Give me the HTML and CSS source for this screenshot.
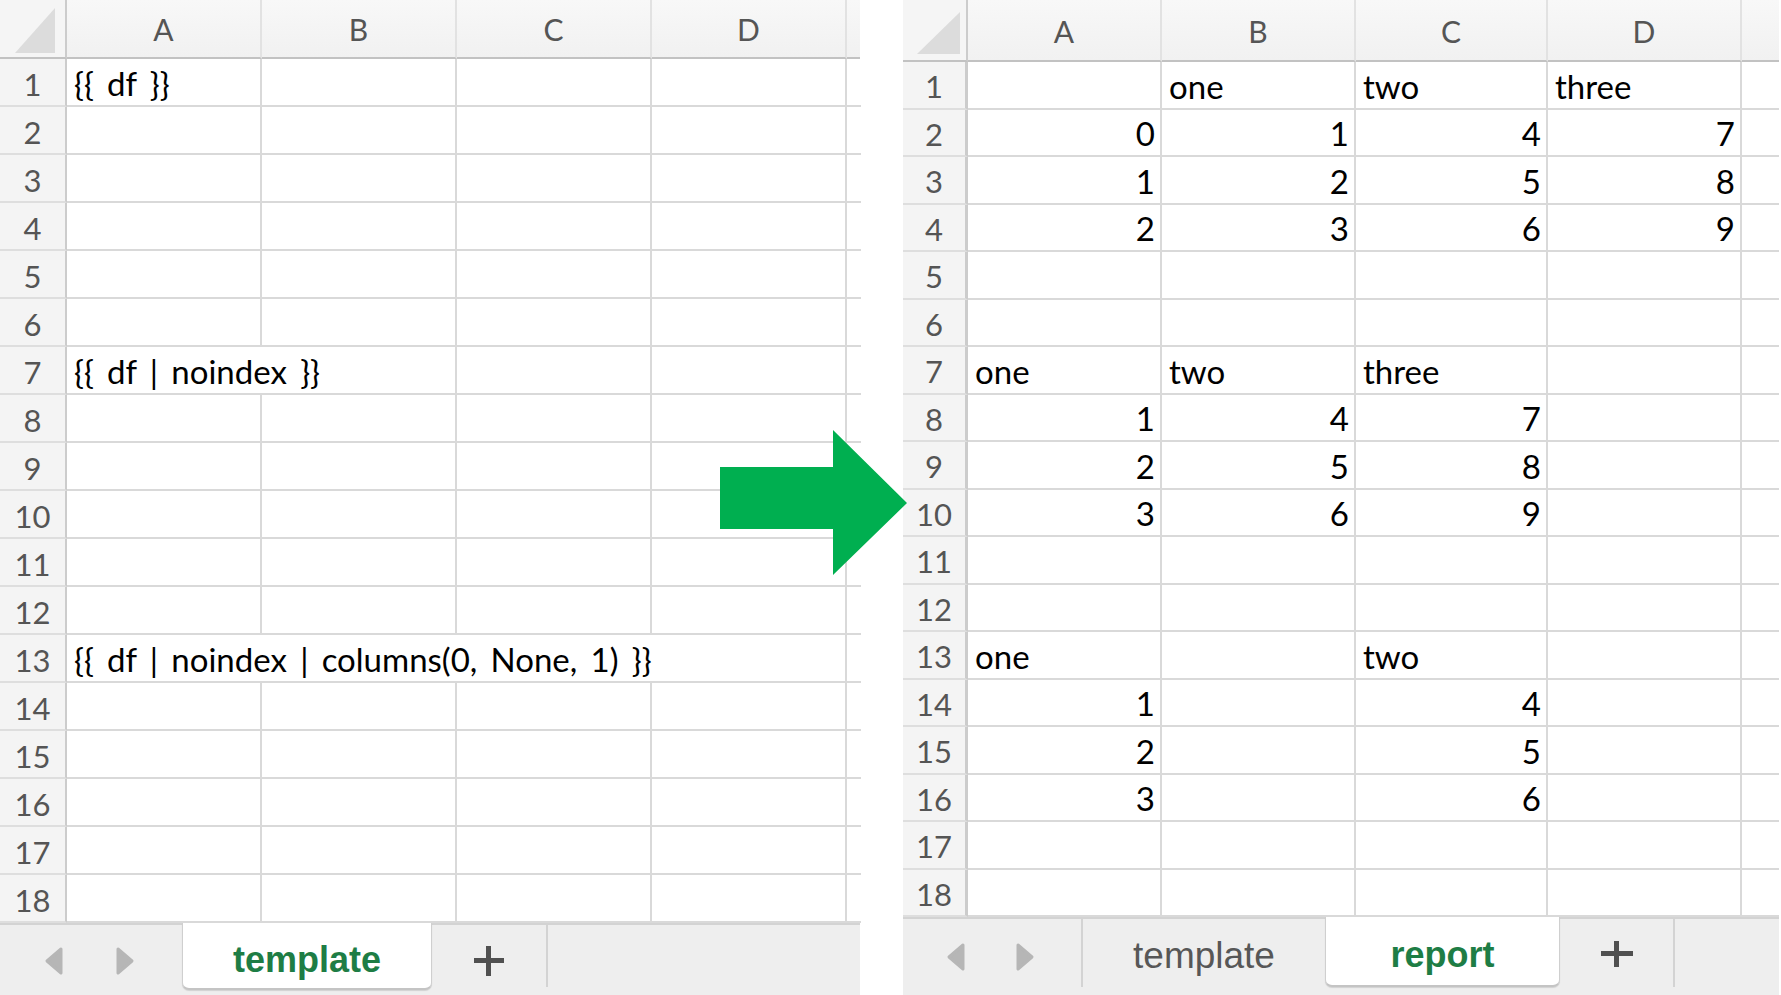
FILE: index.html
```html
<!DOCTYPE html>
<html>
<head>
<meta charset="utf-8">
<link rel="stylesheet" href="styles.css">
</head>
<body>
<div class="stage">
  <section class="sheet sheet-left">
    <div class="grid grid-left">
      <div class="corner"><span class="tri"></span></div><div class="ch">A</div><div class="ch">B</div><div class="ch">C</div><div class="ch">D</div><div class="ch e"></div>
      <div class="rh">1</div><div class="c">{{ df }}</div><div class="c"></div><div class="c"></div><div class="c"></div><div class="c e"></div>
      <div class="rh">2</div><div class="c"></div><div class="c"></div><div class="c"></div><div class="c"></div><div class="c e"></div>
      <div class="rh">3</div><div class="c"></div><div class="c"></div><div class="c"></div><div class="c"></div><div class="c e"></div>
      <div class="rh">4</div><div class="c"></div><div class="c"></div><div class="c"></div><div class="c"></div><div class="c e"></div>
      <div class="rh">5</div><div class="c"></div><div class="c"></div><div class="c"></div><div class="c"></div><div class="c e"></div>
      <div class="rh">6</div><div class="c"></div><div class="c"></div><div class="c"></div><div class="c"></div><div class="c e"></div>
      <div class="rh">7</div><div class="c span2">{{ df | noindex }}</div><div class="c"></div><div class="c"></div><div class="c e"></div>
      <div class="rh">8</div><div class="c"></div><div class="c"></div><div class="c"></div><div class="c"></div><div class="c e"></div>
      <div class="rh">9</div><div class="c"></div><div class="c"></div><div class="c"></div><div class="c"></div><div class="c e"></div>
      <div class="rh">10</div><div class="c"></div><div class="c"></div><div class="c"></div><div class="c"></div><div class="c e"></div>
      <div class="rh">11</div><div class="c"></div><div class="c"></div><div class="c"></div><div class="c"></div><div class="c e"></div>
      <div class="rh">12</div><div class="c"></div><div class="c"></div><div class="c"></div><div class="c"></div><div class="c e"></div>
      <div class="rh">13</div><div class="c span4">{{ df | noindex | columns(0, None, 1) }}</div><div class="c e"></div>
      <div class="rh">14</div><div class="c"></div><div class="c"></div><div class="c"></div><div class="c"></div><div class="c e"></div>
      <div class="rh">15</div><div class="c"></div><div class="c"></div><div class="c"></div><div class="c"></div><div class="c e"></div>
      <div class="rh">16</div><div class="c"></div><div class="c"></div><div class="c"></div><div class="c"></div><div class="c e"></div>
      <div class="rh">17</div><div class="c"></div><div class="c"></div><div class="c"></div><div class="c"></div><div class="c e"></div>
      <div class="rh">18</div><div class="c"></div><div class="c"></div><div class="c"></div><div class="c"></div><div class="c e"></div>
    </div>
    <div class="tabbar tabbar-left">
      <div class="nav nav-left">
        <svg class="navarrow" viewBox="0 0 20 30"><path d="M17 3 L3 15 L17 27 Z"/></svg>
        <svg class="navarrow" viewBox="0 0 20 30"><path d="M3 3 L17 15 L3 27 Z"/></svg>
      </div>
      <div class="tab tab-active tab-template-active">template</div>
      <div class="add add-left"><span class="plus"></span></div>
      <div class="sep"></div>
    </div>
  </section>

  <div class="gap"></div>

  <section class="sheet sheet-right">
    <div class="grid grid-right">
      <div class="corner"><span class="tri"></span></div><div class="ch">A</div><div class="ch">B</div><div class="ch">C</div><div class="ch">D</div><div class="ch e"></div>
      <div class="rh">1</div><div class="c"></div><div class="c">one</div><div class="c">two</div><div class="c">three</div><div class="c e"></div>
      <div class="rh">2</div><div class="c n">0</div><div class="c n">1</div><div class="c n">4</div><div class="c n">7</div><div class="c e"></div>
      <div class="rh">3</div><div class="c n">1</div><div class="c n">2</div><div class="c n">5</div><div class="c n">8</div><div class="c e"></div>
      <div class="rh">4</div><div class="c n">2</div><div class="c n">3</div><div class="c n">6</div><div class="c n">9</div><div class="c e"></div>
      <div class="rh">5</div><div class="c"></div><div class="c"></div><div class="c"></div><div class="c"></div><div class="c e"></div>
      <div class="rh">6</div><div class="c"></div><div class="c"></div><div class="c"></div><div class="c"></div><div class="c e"></div>
      <div class="rh">7</div><div class="c">one</div><div class="c">two</div><div class="c">three</div><div class="c"></div><div class="c e"></div>
      <div class="rh">8</div><div class="c n">1</div><div class="c n">4</div><div class="c n">7</div><div class="c"></div><div class="c e"></div>
      <div class="rh">9</div><div class="c n">2</div><div class="c n">5</div><div class="c n">8</div><div class="c"></div><div class="c e"></div>
      <div class="rh">10</div><div class="c n">3</div><div class="c n">6</div><div class="c n">9</div><div class="c"></div><div class="c e"></div>
      <div class="rh">11</div><div class="c"></div><div class="c"></div><div class="c"></div><div class="c"></div><div class="c e"></div>
      <div class="rh">12</div><div class="c"></div><div class="c"></div><div class="c"></div><div class="c"></div><div class="c e"></div>
      <div class="rh">13</div><div class="c">one</div><div class="c"></div><div class="c">two</div><div class="c"></div><div class="c e"></div>
      <div class="rh">14</div><div class="c n">1</div><div class="c"></div><div class="c n">4</div><div class="c"></div><div class="c e"></div>
      <div class="rh">15</div><div class="c n">2</div><div class="c"></div><div class="c n">5</div><div class="c"></div><div class="c e"></div>
      <div class="rh">16</div><div class="c n">3</div><div class="c"></div><div class="c n">6</div><div class="c"></div><div class="c e"></div>
      <div class="rh">17</div><div class="c"></div><div class="c"></div><div class="c"></div><div class="c"></div><div class="c e"></div>
      <div class="rh">18</div><div class="c"></div><div class="c"></div><div class="c"></div><div class="c"></div><div class="c e"></div>
    </div>
    <div class="tabbar tabbar-right">
      <div class="nav nav-right">
        <svg class="navarrow" viewBox="0 0 20 30"><path d="M17 3 L3 15 L17 27 Z"/></svg>
        <svg class="navarrow" viewBox="0 0 20 30"><path d="M3 3 L17 15 L3 27 Z"/></svg>
      </div>
      <div class="sep"></div>
      <div class="tab tab-inactive">template</div>
      <div class="tab tab-active tab-report">report</div>
      <div class="add add-right"><span class="plus"></span></div>
      <div class="sep"></div>
    </div>
  </section>
</div>

<svg class="big-arrow" viewBox="0 0 187 145"><polygon points="0,37 113,37 113,0 187,73 113,145 113,99 0,99"/></svg>
</body>
</html>
```

FILE: styles.css
```css
* { box-sizing: border-box; }

html, body {
  margin: 0;
  padding: 0;
  background: #ffffff;
}

body {
  width: 1781px;
  height: 995px;
  overflow: hidden;
  position: relative;
  font-family: Lato, "Liberation Sans", sans-serif;
}

.stage {
  display: flex;
  height: 995px;
}

.sheet {
  display: flex;
  flex-direction: column;
  height: 995px;
}

.sheet-left { width: 860px; }
.gap { width: 43px; flex: none; }
.sheet-right { width: 876px; }

.grid { display: grid; }

.grid-left {
  grid-template-columns: 67px 195px 195px 195px 195px 13px;
  grid-template-rows: 59px repeat(18, 48px);
}

.grid-right {
  grid-template-columns: 65px 194px 194px 192px 194px 37px;
  grid-template-rows: 62px repeat(18, 47.5px);
}

.c {
  border-right: 2px solid #d9d9d9;
  border-bottom: 2px solid #d9d9d9;
  display: flex;
  align-items: flex-end;
  padding: 0 7px 1px 7px;
  font-size: 33px;
  line-height: 1.2;
  word-spacing: 4.8px;
  color: #000;
  white-space: nowrap;
  overflow: visible;
}

.c.n { justify-content: flex-end; padding-right: 5px; }
.c.e, .ch.e { border-right: none; }
.span2 { grid-column: span 2; }
.span4 { grid-column: span 4; }

.corner {
  position: relative;
  background: #f5f5f5;
  border-right: 2px solid #cccccc;
  border-bottom: 2px solid #c2c2c2;
}

.tri {
  position: absolute;
  left: 15px;
  top: 8px;
  width: 40px;
  height: 45px;
  background: #dcdcdc;
  clip-path: polygon(100% 0, 100% 100%, 0 100%);
}

.grid-right .tri {
  left: 14px;
  top: 12px;
  width: 43px;
  height: 42px;
}

.ch {
  background: linear-gradient(#f8f8f8, #f1f1f1);
  border-right: 2px solid #e2e2e2;
  border-bottom: 2px solid #c2c2c2;
  display: flex;
  align-items: center;
  justify-content: center;
  color: #555555;
  font-size: 30px;
  padding-top: 1px;
}

.rh {
  background: #f4f4f4;
  border-right: 2px solid #cccccc;
  border-bottom: 2px solid #dedede;
  display: flex;
  align-items: flex-end;
  justify-content: center;
  color: #555555;
  font-size: 31px;
  line-height: 1.2;
  padding-bottom: 2px;
}

.grid-right .rh { border-right-width: 3px; }

/* tab bars */
.tabbar {
  flex: 1;
  display: flex;
  align-items: stretch;
  background: #eeeeee;
  border-top: 2px solid #d3d3d3;
}

.nav {
  display: flex;
  align-items: center;
  flex: none;
}

.nav-left { width: 182px; padding-left: 44px; gap: 51px; padding-top: 2px; }
.nav-right { width: 178px; padding-left: 43px; gap: 49px; }

.navarrow {
  width: 20px;
  height: 30px;
  fill: #b6b6b6;
  stroke: #b6b6b6;
  stroke-width: 3;
  stroke-linejoin: round;
}

.sep {
  width: 2px;
  flex: none;
  background: #d3d3d3;
  margin-bottom: 8px;
}

.tab {
  flex: none;
  display: flex;
  align-items: center;
  justify-content: center;
  font-family: "Liberation Sans", Arial, sans-serif;
  font-size: 36px;
}

.tab-active {
  background: #ffffff;
  margin-top: -2px;
  align-self: flex-start;
  border-left: 1px solid #cfcfcf;
  border-right: 1px solid #cfcfcf;
  border-bottom: 2px solid #c4c4c4;
  border-radius: 0 0 7px 7px;
  box-shadow: 0 1px 1px rgba(0, 0, 0, 0.12);
  color: #1e7d45;
  font-weight: 700;
}

.tab-template-active {
  width: 250px;
  height: 67px;
  padding-top: 9px;
}

.tab-report {
  width: 235px;
  height: 70px;
  padding-top: 7px;
}

.tab-inactive {
  width: 242px;
  color: #575757;
  font-size: 37px;
  padding-bottom: 2px;
}

.add {
  flex: none;
  display: flex;
  align-items: center;
  justify-content: center;
}

.add-left { width: 114px; padding-top: 2px; }
.add-right { width: 113px; padding-bottom: 6px; }

.plus {
  position: relative;
  width: 30px;
  height: 30px;
}

.plus::before,
.plus::after {
  content: "";
  position: absolute;
  background: #505050;
}

.plus::before { left: 0; right: 0; top: 12px; height: 5px; }
.plus::after { top: 0; bottom: 0; left: 12px; width: 5px; }

.add-right .plus { width: 32px; height: 26px; }
.add-right .plus::before { top: 10px; }
.add-right .plus::after { left: 13px; }

.big-arrow {
  position: absolute;
  left: 720px;
  top: 430px;
  width: 187px;
  height: 145px;
  fill: #00af50;
}
```
